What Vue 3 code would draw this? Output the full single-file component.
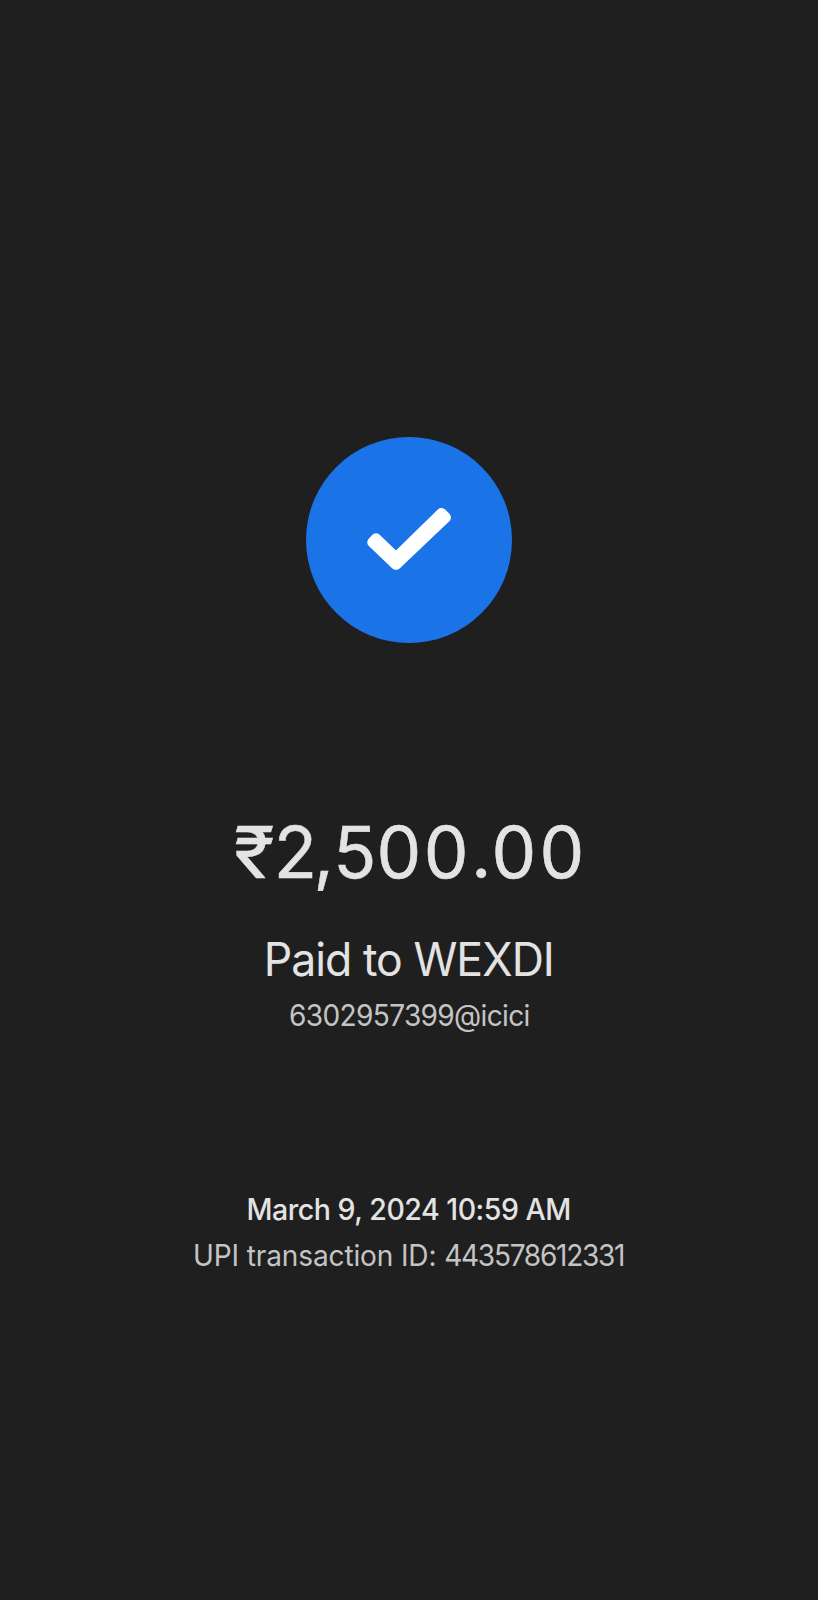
<script setup>
const amount = [
  { text: '₹', tone: 'symbol' },
  { text: '2', tone: 'tight' },
  { text: ',', tone: 'comma' },
  { text: '5', tone: 'five' },
  { text: '00', tone: 'wide' },
  { text: '.', tone: 'point' },
  { text: '0', tone: 'cents' },
  { text: '0', tone: 'point' },
]
const payment = {
  payee: 'Paid to WEXDI',
  handle: '6302957399@icici',
  date: 'March 9, 2024 10:59 AM',
  reference: '443578612331',
}
</script>

<template>
  <main class="screen">
    <svg class="badge" viewBox="0 0 206 206" aria-hidden="true">
      <circle cx="103" cy="103" r="103" fill="#1b73e8" />
      <path d="M66.5 105.3 70 101.5 90 120.8 135.5 76.3 139.7 80.5 90 127.8Z" fill="#fff" stroke="#fff" stroke-width="10.5" stroke-linejoin="round" />
    </svg>
    <div class="amount"><span v-for="(part, i) in amount" :key="i" :class="part.tone">{{ part.text }}</span></div>
    <div class="payee">{{ payment.payee }}</div>
    <div class="handle">{{ payment.handle }}</div>
    <div class="date">{{ payment.date }}</div>
    <div class="reference">UPI transaction ID: <span class="digits">{{ payment.reference }}</span></div>
  </main>
</template>

<style>
body {
  background: #1f1f1f;
}
</style>

<style scoped>
.screen {
  box-sizing: border-box;
  width: 100%;
  height: 1600px;
  padding-top: 437px;
  display: flex;
  flex-direction: column;
  align-items: center;
  background: #1f1f1f;
  color: #e3e3e3;
  font-family: Inter, "Noto Sans", sans-serif;
  white-space: nowrap;
}
.badge {
  width: 206px;
  height: 206px;
  flex: none;
}
.amount {
  margin-top: 164px;
  height: 90px;
  line-height: 90px;
  font-size: 71px;
  -webkit-text-stroke: 0.5px #e3e3e3;
}
.symbol {
  display: inline-block;
  transform: scaleX(1.06);
  transform-origin: left;
  letter-spacing: 1.4px;
}
.tight { letter-spacing: -3.5px; }
.comma { letter-spacing: -0.7px; }
.five { letter-spacing: 0.2px; }
.wide { letter-spacing: 2.4px; }
.point { letter-spacing: 0; }
.cents { letter-spacing: 3.2px; }
.payee {
  margin-top: 34px;
  height: 56px;
  line-height: 56px;
  font-size: 46px;
  letter-spacing: -1px;
  transform: scaleX(0.969);
}
.handle {
  margin-top: 8px;
  height: 40px;
  line-height: 40px;
  font-size: 29.5px;
  letter-spacing: -0.7px;
  transform: scaleX(0.952);
  color: #c4c4c4;
}
.date {
  margin-top: 154px;
  height: 40px;
  line-height: 40px;
  font-size: 29.5px;
  font-weight: 500;
  letter-spacing: -0.5px;
  transform: scaleX(0.967);
}
.reference {
  margin-top: 6px;
  height: 40px;
  line-height: 40px;
  font-size: 29.5px;
  letter-spacing: -0.15px;
  transform: scaleX(0.951);
  color: #c4c4c4;
}
.digits {
  letter-spacing: -1.35px;
}
</style>
